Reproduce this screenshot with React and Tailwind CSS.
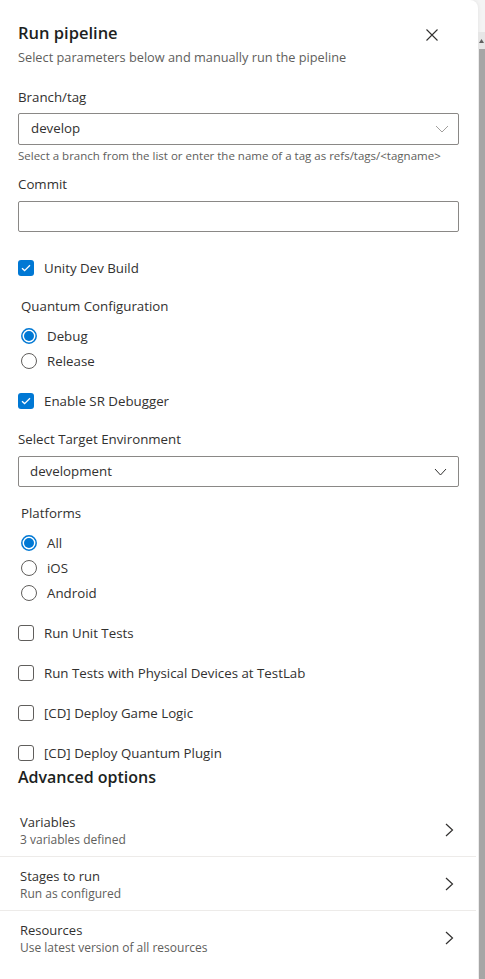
import React from "react";

const font = { fontFamily: '"Open Sans", "Noto Sans", sans-serif' };

function Chevron({ color = "#323130", w = 11, h = 6 }) {
  return (
    <svg width={w + 2} height={h + 2} viewBox={`-1 -1 ${w + 2} ${h + 2}`} fill="none">
      <path d={`M0 0 L${w / 2} ${h} L${w} 0`} stroke={color} strokeWidth="1" />
    </svg>
  );
}

function Checkbox({ checked, label }) {
  return (
    <div className="flex items-center h-[20px]">
      {checked ? (
        <div className="w-[16px] h-[16px] rounded-[3px] bg-[#0078d4] flex items-center justify-center">
          <svg width="10" height="8" viewBox="0 0 10 8" fill="none">
            <path d="M1 4.2 L3.6 6.6 L9 1.2" stroke="white" strokeWidth="1.3" />
          </svg>
        </div>
      ) : (
        <div className="w-[16px] h-[16px] rounded-[3px] border border-[#605e5c] bg-white" />
      )}
      <span className="ml-[10px] text-[13.3px] leading-[20px] text-[#323130]">{label}</span>
    </div>
  );
}

function Radio({ checked, label }) {
  return (
    <div className="flex items-center h-[20px] pl-[3px]">
      <svg width="16" height="16" viewBox="0 0 16 16">
        {checked ? (
          <>
            <circle cx="8" cy="8" r="7.2" fill="white" stroke="#0078d4" strokeWidth="1.5" />
            <circle cx="8" cy="8" r="5" fill="#0078d4" />
          </>
        ) : (
          <circle cx="8" cy="8" r="7.5" fill="white" stroke="#605e5c" strokeWidth="1" />
        )}
      </svg>
      <span className="ml-[10px] text-[13.3px] leading-[20px] text-[#323130]">{label}</span>
    </div>
  );
}

function Row({ title, sub, last }) {
  return (
    <div className={`flex items-center pl-[20px] pr-[22px] pt-[9px] pb-[8px] ${last ? "" : "border-b border-[#edebe9]"}`}>
      <div className="flex-1 flex flex-col">
        <span className="text-[13px] leading-[20px] text-[#323130]">{title}</span>
        <span className="text-[12px] leading-[16px] text-[#605e5c]">{sub}</span>
      </div>
      <svg width="9" height="14" viewBox="0 0 9 14" fill="none">
        <path d="M1 1 L7.5 7 L1 13" stroke="#323130" strokeWidth="1.2" />
      </svg>
    </div>
  );
}

export default function App() {
  return (
    <div className="w-[485px] h-[979px] flex bg-[#f4f4f4] overflow-hidden" style={font}>
      <div className="w-[478px] h-full bg-white rounded-tr-[8px] flex flex-col shadow-[0_0_4px_rgba(0,0,0,0.08)]">
        <div className="pl-[18px] pr-[19px] flex flex-col">
          <div className="flex items-start mt-[21px]">
            <div className="flex-1 flex flex-col">
              <h1 className="text-[16.5px] leading-[24px] font-semibold text-[#201f1e]">Run pipeline</h1>
              <p className="mt-[2px] text-[12.75px] leading-[20px] text-[#605e5c]">
                Select parameters below and manually run the pipeline
              </p>
            </div>
            <div className="mt-[8px] mr-[21px]">
              <svg width="12" height="12" viewBox="0 0 12 12" fill="none">
                <path d="M0.5 0.5 L11.5 11.5 M11.5 0.5 L0.5 11.5" stroke="#323130" strokeWidth="1.1" />
              </svg>
            </div>
          </div>

          <label className="mt-[20px] text-[13.3px] leading-[20px] text-[#323130]">Branch/tag</label>
          <div className="mt-[6px] h-[32px] border border-[#8a8886] rounded-[2px] flex items-center pl-[12px] pr-[9px]">
            <span className="flex-1 text-[13.3px] text-[#323130]">develop</span>
            <Chevron color="#a19f9d" w={12} h={6} />
          </div>
          <p className="mt-[3px] text-[11.5px] leading-[16px] text-[#605e5c] whitespace-nowrap">
            Select a branch from the list or enter the name of a tag as refs/tags/&lt;tagname&gt;
          </p>

          <label className="mt-[10px] text-[13.3px] leading-[20px] text-[#323130]">Commit</label>
          <div className="mt-[7px] h-[31px] border border-[#8a8886] rounded-[2px]" />

          <div className="mt-[26px]">
            <Checkbox checked label="Unity Dev Build" />
          </div>

          <div className="mt-[18px] pl-[3px] text-[13.3px] leading-[20px] text-[#323130]">Quantum Configuration</div>
          <div className="mt-[10px]"><Radio checked label="Debug" /></div>
          <div className="mt-[5px]"><Radio label="Release" /></div>

          <div className="mt-[20px]">
            <Checkbox checked label="Enable SR Debugger" />
          </div>

          <label className="mt-[18px] text-[13.3px] leading-[20px] text-[#323130]">Select Target Environment</label>
          <div className="mt-[7px] h-[31px] border border-[#8a8886] rounded-[2px] flex items-center pl-[11px] pr-[11px]">
            <span className="flex-1 text-[13.3px] text-[#323130]">development</span>
            <Chevron color="#323130" w={11} h={6} />
          </div>

          <div className="mt-[16px] pl-[3px] text-[13.3px] leading-[20px] text-[#323130]">Platforms</div>
          <div className="mt-[10px]"><Radio checked label="All" /></div>
          <div className="mt-[5px]"><Radio label="iOS" /></div>
          <div className="mt-[5px]"><Radio label="Android" /></div>

          <div className="mt-[20px]"><Checkbox label="Run Unit Tests" /></div>
          <div className="mt-[20px]"><Checkbox label="Run Tests with Physical Devices at TestLab" /></div>
          <div className="mt-[20px]"><Checkbox label="[CD] Deploy Game Logic" /></div>
          <div className="mt-[20px]"><Checkbox label="[CD] Deploy Quantum Plugin" /></div>

          <h2 className="mt-[2px] text-[16px] leading-[24px] font-semibold text-[#201f1e]">Advanced options</h2>
        </div>

        <div className="mt-[14px] flex flex-col mr-[2px]">
          <Row title="Variables" sub="3 variables defined" />
          <Row title="Stages to run" sub="Run as configured" />
          <Row title="Resources" sub="Use latest version of all resources" last />
        </div>
      </div>

      <div className="flex-1 flex flex-col pt-[32px]">
        <div className="h-[17px] bg-[#e6e6e6] flex justify-end items-center pr-[1px]">
          <svg width="5" height="4" viewBox="0 0 5 4">
            <path d="M0 4 L2.5 0 L5 4 Z" fill="#606060" />
          </svg>
        </div>
        <div className="flex-1 bg-[#a6a6a6] ml-[1px]" />
      </div>
    </div>
  );
}
